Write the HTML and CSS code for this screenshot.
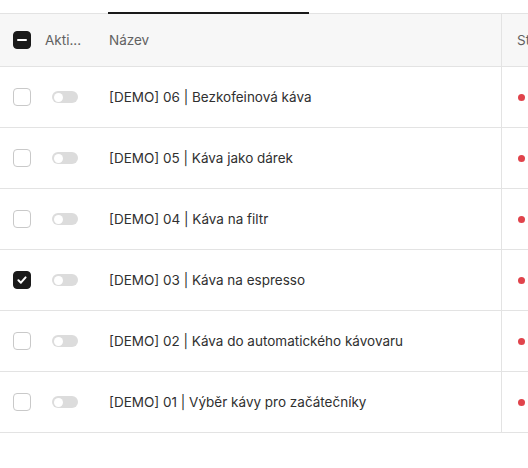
FILE: index.html
```html
<!DOCTYPE html>
<html lang="cs">
<head>
    <meta charset="utf-8" />
    <title>Články</title>
    <link rel="stylesheet" href="styles.css">
</head>
<body>
    <nav class="tabs">
        <div class="tab"></div>
        <div class="tab tab-active"></div>
    </nav>
    <div class="table">
        <div class="row head">
            <div class="cell c-check"><span class="box box-mixed"><span class="dash"></span></span></div>
            <div class="cell c-active">Akti...</div>
            <div class="cell c-name">Název</div>
            <div class="cell c-status">Stav</div>
        </div>
        <div class="row">
            <div class="cell c-check"><span class="box"></span></div>
            <div class="cell c-active"><span class="toggle"></span></div>
            <div class="cell c-name">[DEMO] 06 | Bezkofeinová káva</div>
            <div class="cell c-status"><span class="dot"></span></div>
        </div>
        <div class="row">
            <div class="cell c-check"><span class="box"></span></div>
            <div class="cell c-active"><span class="toggle"></span></div>
            <div class="cell c-name">[DEMO] 05 | Káva jako dárek</div>
            <div class="cell c-status"><span class="dot"></span></div>
        </div>
        <div class="row">
            <div class="cell c-check"><span class="box"></span></div>
            <div class="cell c-active"><span class="toggle"></span></div>
            <div class="cell c-name">[DEMO] 04 | Káva na filtr</div>
            <div class="cell c-status"><span class="dot"></span></div>
        </div>
        <div class="row">
            <div class="cell c-check">
                <span class="box box-on">
                    <svg width="12" height="12" viewBox="0 0 12 12"><path d="M2.4 6.3 L4.9 8.7 L9.6 3.4" fill="none" stroke="#fff" stroke-width="2" stroke-linecap="round" stroke-linejoin="round"/></svg>
                </span>
            </div>
            <div class="cell c-active"><span class="toggle"></span></div>
            <div class="cell c-name">[DEMO] 03 | Káva na espresso</div>
            <div class="cell c-status"><span class="dot"></span></div>
        </div>
        <div class="row">
            <div class="cell c-check"><span class="box"></span></div>
            <div class="cell c-active"><span class="toggle"></span></div>
            <div class="cell c-name">[DEMO] 02 | Káva do automatického kávovaru</div>
            <div class="cell c-status"><span class="dot"></span></div>
        </div>
        <div class="row">
            <div class="cell c-check"><span class="box"></span></div>
            <div class="cell c-active"><span class="toggle"></span></div>
            <div class="cell c-name">[DEMO] 01 | Výběr kávy pro začátečníky</div>
            <div class="cell c-status"><span class="dot"></span></div>
        </div>
    </div>
</body>
</html>
```
FILE: styles.css
```css
* {
    margin: 0;
    padding: 0;
    box-sizing: border-box;
}

body {
    font-family: Inter, "Noto Sans", sans-serif;
    font-size: 13.5px;
    color: #303030;
    background: #fff;
    width: 528px;
    overflow: hidden;
}

.tabs {
    display: flex;
    align-items: flex-end;
    height: 14px;
    border-bottom: 1px solid #e3e3e3;
}
.tab {
    width: 108px;
}
.tab-active {
    width: 201px;
    height: 2px;
    margin-bottom: -1px;
    background: #1a1a1a;
}

.table {
    width: 640px;
}
.row {
    display: grid;
    grid-template-columns: 40px 57px 404px 1fr;
    height: 61px;
    border-bottom: 1px solid #e3e3e3;
}
.row.head {
    height: 53px;
    background: #f7f7f7;
    color: #616161;
}
.cell {
    display: flex;
    align-items: center;
    white-space: nowrap;
}
.c-check {
    padding-left: 13px;
}
.c-active {
    padding-left: 5px;
}
.c-name {
    padding-left: 12px;
}
.c-status {
    border-left: 1px solid #e3e3e3;
    padding-left: 15px;
}

.box {
    display: flex;
    align-items: center;
    justify-content: center;
    width: 18px;
    height: 18px;
    border: 1px solid #c9c9c9;
    border-radius: 4px;
    background: #fff;
}
.box-mixed, .box-on {
    background: #1a1a1a;
    border-color: #1a1a1a;
}
.dash {
    width: 10px;
    height: 2px;
    border-radius: 1px;
    background: #fff;
}

.toggle {
    position: relative;
    display: block;
    width: 26px;
    height: 12px;
    margin-left: 7px;
    border-radius: 6px;
    background: #dcdcdc;
}
.toggle::after {
    content: "";
    position: absolute;
    left: 1.5px;
    top: 1.5px;
    width: 9px;
    height: 9px;
    border-radius: 50%;
    background: #fff;
}

.dot {
    display: block;
    width: 7px;
    height: 7px;
    margin-left: 1px;
    border-radius: 50%;
    background: #e0434b;
}
```
